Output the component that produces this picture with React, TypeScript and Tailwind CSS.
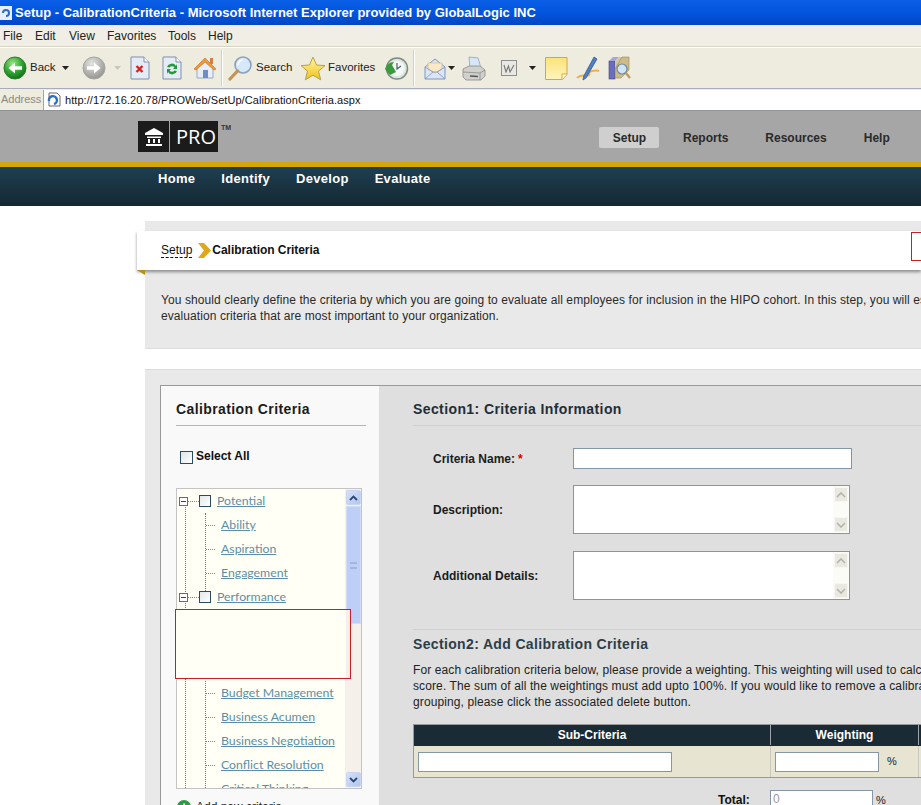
import React from "react";

const Caret = ({ className = "" }: { className?: string }) => (
  <svg width="7" height="4" viewBox="0 0 7 4" className={className}><path d="M0 0h7L3.5 4z" fill="currentColor" /></svg>
);

const NavCircle = ({ dir, on }: { dir: "l" | "r"; on: boolean }) => (
  <svg width="24" height="24" viewBox="0 0 24 24">
    <defs>
      <radialGradient id={`c${dir}`} cx="40%" cy="30%" r="75%">
        <stop offset="0%" stopColor={on ? "#9be58a" : "#e4e4e0"} />
        <stop offset="55%" stopColor={on ? "#2fa52f" : "#b6b6b2"} />
        <stop offset="100%" stopColor={on ? "#0c6b1c" : "#8f8f8b"} />
      </radialGradient>
    </defs>
    <circle cx="12" cy="12" r="11" fill={`url(#c${dir})`} stroke={on ? "#2c7a2c" : "#a5a5a0"} strokeWidth="1" />
    <path d={dir === "l" ? "M19 10.3h-7V6.5L5.5 12l6.5 5.5v-3.8h7z" : "M5 10.3h7V6.5l6.5 5.5-6.5 5.5v-3.8H5z"} fill="#fff" />
  </svg>
);

const PageIcon = ({ children }: { children: React.ReactNode }) => (
  <svg width="20" height="24" viewBox="0 0 20 24">
    <path d="M1 1h13l5 5v17H1z" fill="#e6ecf6" stroke="#7d8fb0" />
    <path d="M14 1v5h5" fill="#fff" stroke="#7d8fb0" />
    {children}
  </svg>
);

const HomeIcon = () => (
  <svg width="24" height="24" viewBox="0 0 24 24">
    <path d="M4 12v10h16V12L12 5z" fill="#e8eef8" stroke="#9aa8c0" />
    <path d="M1 13L12 2l11 11-2 1-9-8-9 8z" fill="#ee9a3a" stroke="#c87422" strokeWidth=".7" />
    <rect x="17" y="2" width="3" height="6" fill="#d87a4a" />
    <rect x="10" y="14" width="5" height="8" fill="#6b8ec8" />
  </svg>
);

const SearchIcon = () => (
  <svg width="25" height="26" viewBox="0 0 25 26">
    <circle cx="15" cy="10" r="8" fill="#d5e9fa" stroke="#8aa1bf" strokeWidth="1.6" />
    <path d="M10 10a5 5 0 0 1 5-5" stroke="#fff" strokeWidth="1.6" fill="none" />
    <path d="M9.5 16L2 24" stroke="#c09555" strokeWidth="3.2" strokeLinecap="round" />
  </svg>
);

const StarIcon = () => (
  <svg width="26" height="25" viewBox="0 0 26 25">
    <defs>
      <linearGradient id="st" x1="0" y1="0" x2="0" y2="1">
        <stop offset="0%" stopColor="#fff6a8" />
        <stop offset="100%" stopColor="#f2c214" />
      </linearGradient>
    </defs>
    <path d="M13 1l3.5 8 8.5.6-6.5 5.6 2.2 8.6L13 19.2l-7.700 4.600 2.200-8.600L1 9.600 9.500 9z" fill="url(#st)" stroke="#b5a24a" />
  </svg>
);

const HistoryIcon = () => (
  <svg width="25" height="25" viewBox="0 0 25 25">
    <circle cx="13" cy="12.500" r="10.500" fill="#dfe6e2" stroke="#7c8c84" strokeWidth="1.500" />
    <circle cx="13" cy="12.500" r="7.500" fill="#f4f7f4" />
    <path d="M13 7v6l4-3" stroke="#49606e" strokeWidth="1.200" fill="none" />
    <path d="M1 13a9 9 0 0 1 9-7l-2 3 4 7-6 3z" fill="#3a9a3c" />
  </svg>
);

const MailIcon = () => (
  <svg width="22" height="23" viewBox="0 0 22 23">
    <path d="M1 10l10-8 10 8v12H1z" fill="#dbe5f6" stroke="#7f95bd" />
    <path d="M4 12V6h14v6l-7 4z" fill="#fbe8c6" stroke="#d9b98a" strokeWidth=".7" />
    <path d="M1 22l8-7h4l8 7M1 10l8 5M21 10l-8 5" fill="none" stroke="#7f95bd" strokeWidth=".8" />
  </svg>
);

const PrinterIcon = () => (
  <svg width="24" height="25" viewBox="0 0 24 25">
    <path d="M7 1l9 1 3 10H8z" fill="#d6e7f8" stroke="#8ea3b8" strokeWidth=".8" />
    <path d="M1 13l6-3h11l5 4v6l-4 4H4l-3-3z" fill="#d0d0cc" stroke="#8b8b88" strokeWidth=".8" />
    <path d="M1 16l17 1 5-3M18 17v7" fill="none" stroke="#8b8b88" strokeWidth=".8" />
    <path d="M8 20l8 .5" stroke="#555" strokeWidth="1.400" />
  </svg>
);

const WordIcon = () => (
  <div className="w-[16px] h-[16px] border border-[#8e8e8e] bg-[#e8e8e4] flex items-center justify-center">
    <svg width="12" height="9" viewBox="0 0 12 9"><path d="M1 1l2 7 2.500-6 1.500 6 4-7" fill="none" stroke="#77776f" strokeWidth="1.100" /></svg>
  </div>
);

const NoteIcon = () => (
  <svg width="23" height="23" viewBox="0 0 23 23">
    <defs>
      <linearGradient id="nt" x1="0" y1="0" x2="0" y2="1">
        <stop offset="0%" stopColor="#fbe37a" />
        <stop offset="100%" stopColor="#fff4bd" />
      </linearGradient>
    </defs>
    <path d="M.5.500h21.500v17l-4.500 5H.5z" fill="url(#nt)" stroke="#d9a92c" />
    <path d="M17 22v-5h5" fill="#fff" stroke="#d9a92c" />
  </svg>
);

const PenIcon = () => (
  <svg width="25" height="25" viewBox="0 0 25 25">
    <path d="M1 22c4-5 10-1 12-3s-3-2 0-3 8-2 10-1" stroke="#f0b040" strokeWidth="2" fill="none" />
    <path d="M18 1l3 2-11 19-3 2 .5-3.500z" fill="#4e7fc4" stroke="#2c4f86" strokeWidth=".7" />
  </svg>
);

const ResearchIcon = () => (
  <svg width="23" height="24" viewBox="0 0 23 24">
    <rect x="1" y="5" width="6" height="18" fill="#6a6cc0" stroke="#44458c" strokeWidth=".6" />
    <path d="M1 5l4-4h6L7 5z" fill="#a4a6dc" />
    <path d="M7 5l4-4h3v5l-7 7z" fill="#d4c6a0" />
    <path d="M14 1h7v13l-8 8H7V13z" fill="#cdbb88" stroke="#8a7a4a" strokeWidth=".5" />
    <circle cx="14" cy="13" r="5" fill="#cfe4f6" stroke="#6c8a9e" strokeWidth="1.200" />
    <path d="M17.500 16.500L22 22" stroke="#b89a5a" strokeWidth="2.200" />
  </svg>
);

const Sep = () => <div className="w-[2px] h-[36px] bg-[#d4d0c4] border-r border-white" />;

const TreeParent = ({ label }: { label: string }) => (
  <div className="relative h-6 flex items-center pl-[2px]">
    <span className="shrink-0 w-[9px] h-[9px] border border-[#6b6b6b] bg-white flex items-center justify-center"><span className="w-[5px] h-px bg-[#444]" /></span>
    <span className="shrink-0 w-[11px] border-t border-dotted border-[#888]" />
    <span className="shrink-0 w-[12px] h-[12px] border border-[#2b4a66] bg-gradient-to-br from-[#e4e8ea] to-white" />
    <a className="ml-[6px] text-[#5b8fa8] underline text-[12.3px] [font-family:Lato,sans-serif]">{label}</a>
  </div>
);

const TreeChild = ({ label }: { label: string }) => (
  <div className="relative h-6 flex items-center pl-[29px]">
    <span className="shrink-0 w-[9px] border-t border-dotted border-[#888]" />
    <a className="ml-[6px] whitespace-nowrap text-[#5b8fa8] underline text-[12.3px] [font-family:Lato,sans-serif]">{label}</a>
  </div>
);

const ScrollBtn = ({ up }: { up: boolean }) => (
  <div className="w-[15px] h-[15px] rounded-[2px] bg-gradient-to-br from-[#d6e0f8] to-[#b4c6ec] border border-[#c8d6f4] flex items-center justify-center">
    <svg width="9" height="6" viewBox="0 0 9 6"><path d={up ? "M1 5l3.500-3.500L8 5" : "M1 1l3.500 3.500L8 1"} fill="none" stroke="#2c4878" strokeWidth="1.800" /></svg>
  </div>
);

const PaleBtn = ({ up }: { up: boolean }) => (
  <div className="w-[14px] h-[15px] bg-[#e9e9e2] border border-[#f6f6f2] flex items-center justify-center">
    <svg width="10" height="6" viewBox="0 0 10 6"><path d={up ? "M1 5l4-4 4 4" : "M1 1l4 4 4-4"} fill="none" stroke="#b4b4ac" strokeWidth="1.600" /></svg>
  </div>
);

const TextArea = () => (
  <div className="w-[277px] h-[49px] border border-[#8596a6] bg-white flex justify-end">
    <div className="w-[16px] h-full bg-[#fbfbf8] flex flex-col justify-between items-center py-px">
      <PaleBtn up />
      <PaleBtn up={false} />
    </div>
  </div>
);

const Label = ({ children }: { children: React.ReactNode }) => (
  <div className="w-[160px] pl-5 text-xs font-bold text-[#1c1c1c]">{children}</div>
);

export default function App() {
  return (
    <div className="relative w-[921px] h-[805px] overflow-hidden bg-white [font-family:Liberation_Sans,Arial,sans-serif]">
      {/* title bar */}
      <div className="h-[25px] bg-gradient-to-b from-[#0a5fe6] via-[#0255dc] to-[#0146c6] flex items-center gap-[3px]">
        <svg width="12" height="14" viewBox="0 0 12 14"><rect width="12" height="14" fill="#e8eef8" /><path d="M3 7a3 3 0 1 1 3 3" stroke="#2c6cc4" strokeWidth="2" fill="none" /></svg>
        <span className="text-white font-bold text-[13px] whitespace-nowrap">Setup - CalibrationCriteria - Microsoft Internet Explorer provided by GlobalLogic INC</span>
      </div>
      {/* menu bar */}
      <div className="h-[22px] bg-[#f0eee5] border-b border-[#d8d4c6] flex items-center text-xs text-[#222] pl-[3px]">
        <span className="w-[32px]">File</span>
        <span className="w-[34px]">Edit</span>
        <span className="w-[38px]">View</span>
        <span className="w-[61px]">Favorites</span>
        <span className="w-[40px]">Tools</span>
        <span>Help</span>
      </div>
      {/* toolbar */}
      <div className="h-[41px] bg-[#eeebdf] border-t border-white flex items-center text-[11.5px] text-[#222] pl-[3px]">
        <NavCircle dir="l" on />
        <span className="ml-[3px] w-[23px]">Back</span>
        <Caret className="ml-[9px] text-[#222]" />
        <span className="ml-[13px] flex"><NavCircle dir="r" on={false} /></span>
        <Caret className="ml-[8px] text-[#c8c8c0]" />
        <span className="ml-[9px] flex"><PageIcon><path d="M6.500 10l6 6m0-6l-6 6" stroke="#d22" strokeWidth="2.400" /></PageIcon></span>
        <span className="ml-[12px] flex"><PageIcon><path d="M5 11a5 5 0 0 1 9-1l1-2v5h-4l1.500-1.500a3 3 0 0 0-5 0zM15 15a5 5 0 0 1-9 1l-1 2v-5h4l-1.500 1.500a3 3 0 0 0 5 0z" fill="#1f9a3a" /></PageIcon></span>
        <span className="ml-[11px] flex"><HomeIcon /></span>
        <span className="ml-[4px] flex"><Sep /></span>
        <span className="ml-[5px] flex"><SearchIcon /></span>
        <span className="ml-[3px] w-[35px]">Search</span>
        <span className="ml-[9px] flex"><StarIcon /></span>
        <span className="ml-[2px] w-[45px]">Favorites</span>
        <span className="ml-[11px] flex"><HistoryIcon /></span>
        <span className="ml-[4px] flex"><Sep /></span>
        <span className="ml-[9px] flex"><MailIcon /></span>
        <Caret className="ml-[2px] text-[#222]" />
        <span className="ml-[7px] flex"><PrinterIcon /></span>
        <span className="ml-[15px] flex"><WordIcon /></span>
        <Caret className="ml-[12px] text-[#222]" />
        <span className="ml-[9px] flex"><NoteIcon /></span>
        <span className="ml-[8px] flex"><PenIcon /></span>
        <span className="ml-[7px] flex"><ResearchIcon /></span>
      </div>
      {/* address bar */}
      <div className="h-[22px] bg-[#eeebdf] border-t border-[#a9adb8] flex items-center">
        <span className="text-[#8a8a84] w-[43px] pl-px text-[11px]">Address</span>
        <div className="flex-1 h-[20px] bg-white border-l border-[#9aa6b8] flex items-center pl-[3px] gap-[3px] text-[#111] text-[11px] tracking-[0.06px]">
          <svg width="15" height="15" viewBox="0 0 15 15"><path d="M2 1h8l3 3v10H2z" fill="#fff" stroke="#666" /><path d="M2 9a4 4 0 1 1 5 3" stroke="#2b6cc4" strokeWidth="2.400" fill="none" /></svg>
          <span className="pt-px">http://172.16.20.78/PROWeb/SetUp/CalibrationCriteria.aspx</span>
        </div>
      </div>
      {/* gray header */}
      <div className="h-[52px] bg-[#a6a6a6] border-t border-[#8f9498] flex pl-[138px] pt-[10px]">
        <div className="w-[80px] h-[31px] bg-[#1b1b1b] flex items-center text-white">
          <div className="w-[32px] h-full border-r border-[#a6a6a6] flex items-center justify-center">
            <svg width="20" height="20" viewBox="0 0 20 20"><path d="M10 1L1 6v2h18V6z" fill="#fff" /><path d="M3 9.500h14v1.500H3z" fill="#fff" /><path d="M4 12h2v4H4zM9 12h2v4H9zM14 12h2v4h-2z" fill="#fff" /><path d="M2 17h16v2H2z" fill="#fff" /></svg>
          </div>
          <span className="ml-[6px] text-[20px] leading-none [font-family:Open_Sans,sans-serif]">PRO</span>
        </div>
        <span className="ml-[3px] w-[10px] text-[7px] font-bold text-[#333] leading-none mt-[3px]">TM</span>
        <nav className="ml-[368px] mt-[6px] h-[21px] flex items-center text-xs font-bold text-[#2a2a2a]">
          <span className="w-[60px] h-[21px] pl-px bg-[#cfcfcf] rounded-[2px] flex items-center justify-center">Setup</span>
          <span className="ml-6">Reports</span>
          <span className="ml-[37px]">Resources</span>
          <span className="ml-[37px]">Help</span>
        </nav>
      </div>
      <div className="h-[5px] bg-[#d5a50a]" />
      <div className="h-[39px] bg-gradient-to-b from-[#1e3f52] to-[#152832] flex items-start pl-[158px] gap-[26px] text-white font-bold text-[13px] leading-[24px] tracking-[0.3px]">
        <span>Home</span>
        <span>Identify</span>
        <span>Develop</span>
        <span>Evaluate</span>
      </div>
      {/* content */}
      <main className="pl-[145px] pt-[15px]">
        <section className="h-[128px] bg-[#e9e9e9] border-b border-[#dcdcdc] pt-[10px] w-[776px]">
          <div className="relative -ml-2 h-[39px] bg-white shadow-[0_2px_3px_rgba(0,0,0,0.4)] flex items-center pl-6 text-xs text-[#111]">
            <span className="border-b border-dashed border-[#111] leading-[14px]">Setup</span>
            <svg className="ml-[6px]" width="13" height="15" viewBox="0 0 13 15"><path d="M0 0h6l7 7.500L6 15H0l6-7.500z" fill="#dea71c" /></svg>
            <span className="ml-px pb-px font-bold text-[#111] tracking-[-0.05px]">Calibration Criteria</span>
            <div className="absolute left-[774px] top-[1px] w-[20px] h-[29px] border border-[#c4202a]" />
            <div className="absolute left-0 -bottom-[5px] w-0 h-0 border-t-[5px] border-l-[8px] border-t-[#b59018] border-l-transparent" />
          </div>
          <p className="mt-[22px] pl-4 text-xs leading-4 tracking-[0.08px] text-[#2a2a2a] whitespace-nowrap">
            You should clearly define the criteria by which you are going to evaluate all employees for inclusion in the HIPO cohort. In this step, you will establish the
            <br />
            evaluation criteria that are most important to your organization.
          </p>
        </section>
        <section className="mt-5 w-[776px] h-[440px] bg-[#e9e9e9] pl-[15px] pt-[15px] border-t border-[#dcdcdc]">
          <div className="flex border-l border-t border-[#999] h-[424px]">
            {/* left column */}
            <aside className="w-[218px] shrink-0 bg-[#f9f9f9] pl-[15px] pr-[13px]">
              <h2 className="pt-[15px] pb-[7px] text-sm font-bold text-[#1c1c1c] tracking-[0.4px] border-b border-[#b5b5b5] leading-[17px]">Calibration Criteria</h2>
              <label className="flex items-center pl-[4px] mt-[22px] text-xs font-bold text-[#111] h-4">
                <span className="w-[13px] h-[13px] border border-[#2b4a66] bg-gradient-to-br from-[#dfe4e6] to-white mt-[3px]" />
                <span className="ml-[3px]">Select All</span>
              </label>
              <div className="relative mt-[24px] w-[186px] h-[301px] border border-[#c4c4c4] bg-[#fffff5] flex overflow-hidden">
                <div className="relative flex-1 overflow-hidden">
                  <div className="absolute left-[8px] top-[18px] bottom-0 border-l border-dotted border-[#777]" />
                  <div className="absolute left-[28px] top-[24px] h-[78px] border-l border-dotted border-[#777]" />
                  <div className="absolute left-[28px] top-[192px] bottom-0 border-l border-dotted border-[#777]" />
                  <TreeParent label="Potential" />
                  <TreeChild label="Ability" />
                  <TreeChild label="Aspiration" />
                  <TreeChild label="Engagement" />
                  <TreeParent label="Performance" />
                  <div className="h-[72px]" />
                  <TreeChild label="Budget Management" />
                  <TreeChild label="Business Acumen" />
                  <TreeChild label="Business Negotiation" />
                  <TreeChild label="Conflict Resolution" />
                  <TreeChild label="Critical Thinking" />
                </div>
                <div className="w-[16px] shrink-0 bg-[#f5f1ea] flex flex-col items-center py-px">
                  <ScrollBtn up />
                  <div className="mt-[1px] w-[15px] h-[118px] bg-[#bdcff6] border border-[#d0dcf8] flex items-center justify-center">
                    <div className="w-[7px] h-[7px] border-y-2 border-[#a4b6dc] border-double" />
                  </div>
                  <div className="flex-1" />
                  <ScrollBtn up={false} />
                </div>
              </div>
              <div className="mt-[10px] flex items-center pl-[1px] text-xs text-[#222] h-[16px]">
                <span className="w-[14px] h-[14px] rounded-full bg-[#2f9a46] text-white text-[13px] font-bold leading-[14px] text-center">+</span>
                <span className="ml-[5px] whitespace-nowrap">Add new criteria</span>
              </div>
            </aside>
            {/* right column */}
            <div className="flex-1 bg-[#dfdfdf] pl-[34px] pt-[15px]">
              <h2 className="text-sm font-bold text-[#1f2e38] tracking-[0.4px] leading-[17px] pb-[7px] border-b border-[#cfcfcf]">Section1: Criteria Information</h2>
              <div className="mt-[22px] flex items-center h-[21px]">
                <Label>Criteria Name:<span className="ml-[3px] text-[#d00000]">*</span></Label>
                <div className="w-[279px] h-[21px] border border-[#8596a6] bg-white" />
              </div>
              <div className="mt-[16px] flex items-center">
                <Label>Description:</Label>
                <TextArea />
              </div>
              <div className="mt-[17px] flex items-center">
                <Label>Additional Details:</Label>
                <TextArea />
              </div>
              <div className="mt-[29px] border-t border-[#cfcfcf] pt-[6px]">
                <h2 className="text-sm font-bold text-[#2c3e48] tracking-[0.35px] leading-[17px]">Section2: Add Calibration Criteria</h2>
                <p className="mt-[9px] text-xs leading-4 tracking-[0.11px] text-[#222] whitespace-nowrap">
                  For each calibration criteria below, please provide a weighting. This weighting will used to calculate the
                  <br />
                  score. The sum of all the weightings must add upto 100%. If you would like to remove a calibration
                  <br />
                  grouping, please click the associated delete button.
                </p>
              </div>
              <div className="mt-[14px] border border-[#999] w-[600px]">
                <div className="h-[21px] pb-px bg-[#1a2b36] flex text-xs font-bold text-white items-center">
                  <span className="w-[357px] h-full flex items-center justify-center border-r border-[#9aa4aa]">Sub-Criteria</span>
                  <span className="w-[148px] h-full flex items-center justify-center border-r border-[#9aa4aa]">Weighting</span>
                </div>
                <div className="h-[31px] bg-[#e8e4d2] flex items-center text-xs text-[#222]">
                  <div className="w-[357px] pl-[4px] border-r border-[#c8c8c0] h-full flex items-center">
                    <div className="w-[254px] h-[20px] bg-white border border-[#8596a6]" />
                  </div>
                  <div className="w-[148px] pl-[4px] flex items-center border-r border-[#c8c8c0] h-full">
                    <div className="w-[104px] h-[20px] bg-white border border-[#8596a6]" />
                    <span className="ml-[8px] text-[11px]">%</span>
                  </div>
                </div>
              </div>
              <div className="mt-[12px] flex items-center text-xs h-[20px]">
                <span className="ml-[305px] w-[52px] font-bold text-[#111]">Total:</span>
                <div className="w-[103px] h-[20px] border border-[#8596a6] bg-white text-[#999] pl-[2px]">0</div>
                <span className="ml-[3px] text-[#222] text-[11px]">%</span>
              </div>
            </div>
          </div>
        </section>
      </main>
      {/* red annotation box over the tree */}
      <div className="absolute left-[175px] top-[609px] w-[176px] h-[70px] border border-[#c4202a] bg-[#fffff5] flex justify-end">
        <div className="w-[4px] h-full bg-[#f5efe6]" />
      </div>
    </div>
  );
}
